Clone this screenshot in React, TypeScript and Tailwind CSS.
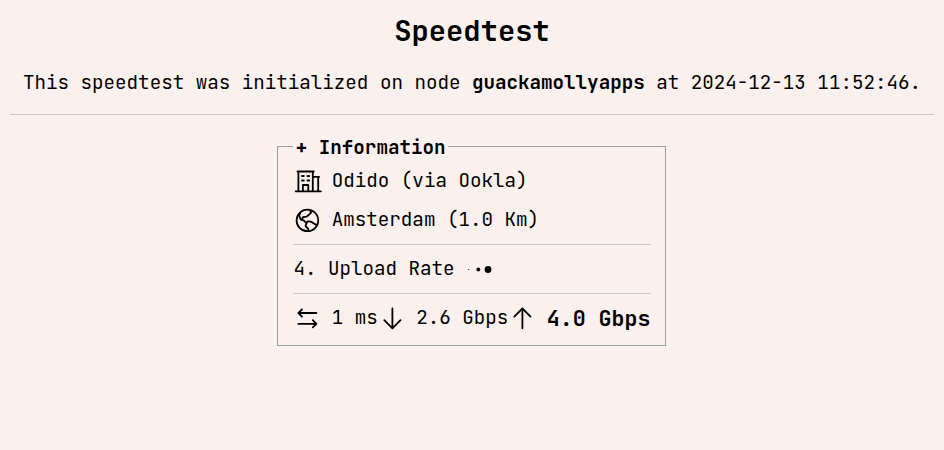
import type { ReactNode } from "react";
import {
  PiArrowDown,
  PiArrowUp,
  PiArrowsLeftRight,
  PiBuildingOffice,
  PiGlobeHemisphereWest,
} from "react-icons/pi";

function InfoRow({ icon, children }: { icon: ReactNode; children: ReactNode }) {
  return (
    <div className="flex h-[26px] items-center gap-[9.6px]">
      <span className="mt-[2.2px] shrink-0 text-[28.8px]">{icon}</span>
      <span>{children}</span>
    </div>
  );
}

export default function App() {
  return (
    <main className="h-[450px] overflow-hidden bg-[#faf0ee] px-2.5 font-['JetBrains_Mono','DejaVu_Sans_Mono',monospace] text-[19.2px] leading-[26px] whitespace-pre text-black">
      <h1 className="pt-3 text-center text-[28.8px] leading-[38px] font-bold">Speedtest</h1>
      <p className="mt-[19px] text-center">
        This speedtest was initialized on node <b>guackamollyapps</b> at 2024-12-13 11:52:46.
      </p>
      <hr className="mt-[19px] border-[#cdc6c5]" />
      <fieldset className="mt-[19px] ml-[267px] h-[212px] w-[389px] border border-[#98a09f] pr-[14px] pl-[15px]">
        <legend className="h-[25px] px-[2.8px] font-bold">+ Information</legend>
        <div className="mt-2 pl-[0.4px]">
          <InfoRow icon={<PiBuildingOffice />}>Odido (via Ookla)</InfoRow>
        </div>
        <div className="mt-[13px] pl-[0.4px]">
          <InfoRow icon={<PiGlobeHemisphereWest />}>Amsterdam (1.0 Km)</InfoRow>
        </div>
        <hr className="mt-[12px] border-[#c8c8c6]" />
        <div className="mt-[10px] flex h-[26px] items-center pl-[0.4px]">
          <span>4. Upload Rate</span>
          <svg className="mt-[2px] ml-[11px]" width="30" height="12" viewBox="0 0 30 12">
            <circle cx="2.7" cy="6.5" r=".6" />
            <circle cx="12.3" cy="6.5" r="1.9" />
            <circle cx="22" cy="6.5" r="3.4" />
          </svg>
        </div>
        <hr className="mt-[12px] border-[#c8c8c6]" />
        <div className="mt-[10px] flex h-[26px] items-center pl-[0.4px]">
          <InfoRow icon={<PiArrowsLeftRight />}>1 ms</InfoRow>
          <InfoRow icon={<PiArrowDown />}>2.6 Gbps</InfoRow>
          <InfoRow icon={<PiArrowUp />}>
            <b className="block pt-0.5 text-[21.6px]">4.0 Gbps</b>
          </InfoRow>
        </div>
      </fieldset>
    </main>
  );
}
